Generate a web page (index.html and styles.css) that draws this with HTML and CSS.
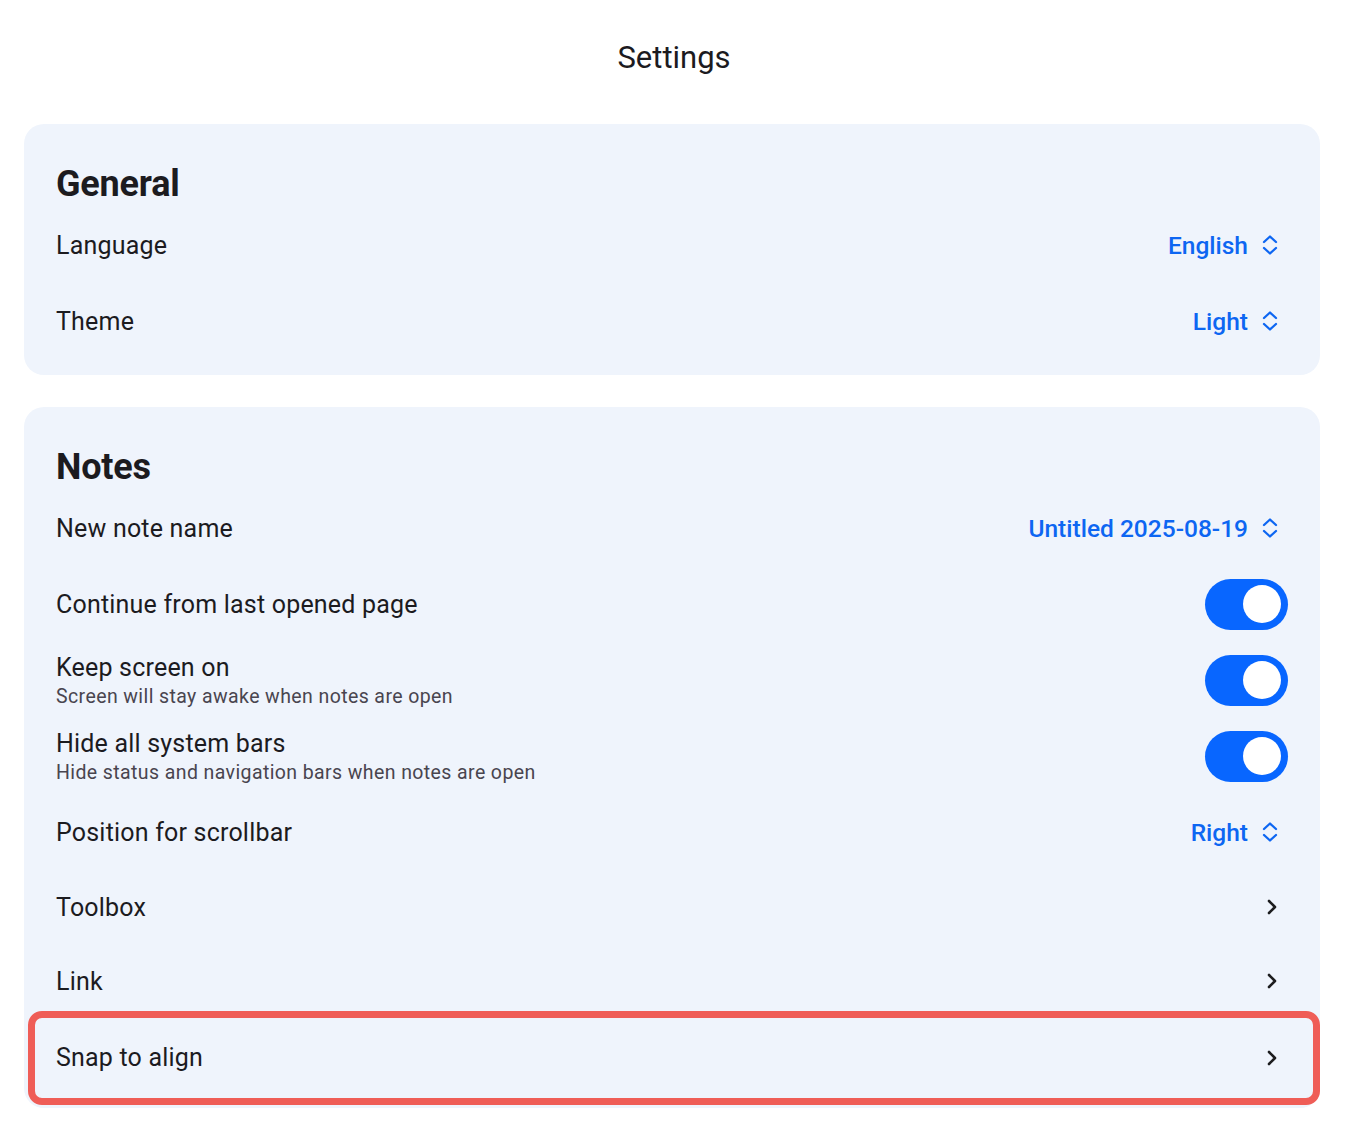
FILE: index.html
```html
<!DOCTYPE html>
<html lang="en">
<head>
  <meta charset="UTF-8">
  <title>Settings</title>
  <link rel="stylesheet" href="styles.css">
</head>
<body>

<h1 class="title">Settings</h1>

<section class="card">
  <h2>General</h2>
  <div class="row">
    <span class="label">Language</span>
    <span class="select">English
      <svg class="updown" viewBox="0 0 24 24"><path d="M6 9 L12 3.5 L18 9 M6 15 L12 20.5 L18 15"/></svg>
    </span>
  </div>
  <div class="row">
    <span class="label">Theme</span>
    <span class="select">Light
      <svg class="updown" viewBox="0 0 24 24"><path d="M6 9 L12 3.5 L18 9 M6 15 L12 20.5 L18 15"/></svg>
    </span>
  </div>
</section>

<section class="card">
  <h2>Notes</h2>
  <div class="row">
    <span class="label">New note name</span>
    <span class="select">Untitled 2025-08-19
      <svg class="updown" viewBox="0 0 24 24"><path d="M6 9 L12 3.5 L18 9 M6 15 L12 20.5 L18 15"/></svg>
    </span>
  </div>
  <div class="row">
    <span class="label">Continue from last opened page</span>
    <span class="switch on"><span class="knob"></span></span>
  </div>
  <div class="row">
    <div class="text">
      <span class="label">Keep screen on</span>
      <span class="sub">Screen will stay awake when notes are open</span>
    </div>
    <span class="switch on"><span class="knob"></span></span>
  </div>
  <div class="row">
    <div class="text">
      <span class="label">Hide all system bars</span>
      <span class="sub">Hide status and navigation bars when notes are open</span>
    </div>
    <span class="switch on"><span class="knob"></span></span>
  </div>
  <div class="row">
    <span class="label">Position for scrollbar</span>
    <span class="select">Right
      <svg class="updown" viewBox="0 0 24 24"><path d="M6 9 L12 3.5 L18 9 M6 15 L12 20.5 L18 15"/></svg>
    </span>
  </div>
  <div class="row nav">
    <span class="label">Toolbox</span>
    <svg class="chev" viewBox="0 0 24 24"><path d="M9 6 L15 12 L9 18"/></svg>
  </div>
  <div class="row nav">
    <span class="label">Link</span>
    <svg class="chev" viewBox="0 0 24 24"><path d="M9 6 L15 12 L9 18"/></svg>
  </div>
  <div class="row nav highlight">
    <span class="label">Snap to align</span>
    <svg class="chev" viewBox="0 0 24 24"><path d="M9 6 L15 12 L9 18"/></svg>
  </div>
</section>

</body>
</html>
```

FILE: styles.css
```css
body {
  font-family: Roboto, "Noto Sans", sans-serif;
  background: #ffffff;
  margin: 0;
  color: #1c1b1f;
}
.title {
  margin: 0;
  padding: 38px 0 46px;
  line-height: 40px;
  text-align: center;
  font-size: 31px;
  font-weight: 400;
  color: #1c1b1f;
}
.card {
  margin: 0 28px 32px 24px;
  background: #eff4fc;
  border-radius: 20px;
  padding: 35px 32px 16px;
}
.card + .card {
  margin-bottom: 0;
  padding-bottom: 3px;
}
.card h2 {
  margin: 0;
  height: 48px;
  padding-top: 1px;
  box-sizing: border-box;
  line-height: 48px;
  font-size: 36px;
  font-weight: 700;
  letter-spacing: -0.2px;
}
.row {
  display: flex;
  align-items: center;
  justify-content: space-between;
  height: 76px;
}
.row.nav {
  height: 74px;
}
.row.highlight {
  box-sizing: border-box;
  height: 94px;
  margin: -7px -32px 0 -28px;
  padding: 0 25px 0 21px;
  border: 7px solid #ef5d57;
  border-radius: 14px;
}
.row > .label,
.text {
  padding-top: 2px;
}
.row.highlight > .label {
  padding-top: 0;
}
.label {
  font-size: 25px;
  letter-spacing: 0.2px;
  line-height: 30px;
}
.text {
  display: flex;
  flex-direction: column;
}
.sub {
  margin-top: 2px;
  font-size: 19.5px;
  letter-spacing: 0.4px;
  line-height: 24px;
  color: #49454f;
}
.select {
  display: flex;
  align-items: center;
  gap: 10px;
  padding-right: 6px;
  font-size: 24.5px;
  font-weight: 500;
  color: #0d66f2;
}
.updown {
  width: 24px;
  height: 24px;
  fill: none;
  stroke: #0d66f2;
  stroke-width: 2.3;
  stroke-linecap: round;
  stroke-linejoin: round;
}
.chev {
  width: 24px;
  height: 24px;
  margin-right: 4px;
  fill: none;
  stroke: #1d1d1f;
  stroke-width: 2.6;
  stroke-linecap: round;
  stroke-linejoin: round;
}
.switch {
  display: flex;
  align-items: center;
  justify-content: flex-end;
  box-sizing: border-box;
  width: 83px;
  height: 51px;
  padding: 0 7px;
  border-radius: 26px;
  background: #0866ff;
}
.knob {
  width: 38px;
  height: 38px;
  border-radius: 50%;
  background: #ffffff;
}
```
